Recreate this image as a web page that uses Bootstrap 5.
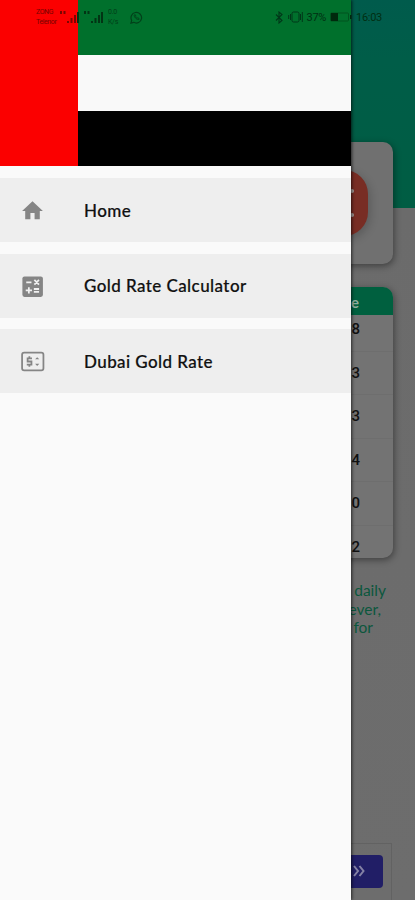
<!DOCTYPE html>
<html lang="en">
<head>
<meta charset="utf-8">
<meta name="viewport" content="width=device-width, initial-scale=1">
<title>Dubai Gold Rate</title>
<link href="https://cdn.jsdelivr.net/npm/bootstrap@5.3.0/dist/css/bootstrap.min.css" rel="stylesheet">
<style>
body{font-family:Lato,"Open Sans",sans-serif;background:#6c6c6c;color:#111;width:415px;height:900px;overflow:hidden}
svg{display:block;flex:none}
.screen{height:900px;overflow:hidden;background:linear-gradient(#005b4c 0,#005d48 60px,#005d43 208px,#6b6b6b 208px,#6d6d6d 100%);padding:142px 22px 0}
.pane{background:#707070;border-radius:10px;box-shadow:1px 2px 7px rgba(0,0,0,.42)}
.promo{height:122px;padding-right:25px}
.pill{width:64px;height:66px;border-radius:24px;background:#782d24;box-shadow:2px 3px 10px rgba(0,0,0,.2);padding-left:46px;gap:20px}
.pill i{width:4px;height:4px;border-radius:50%;background:#a59a98}
.rates{margin-top:23px;height:271px;background:#737373;overflow:hidden}
.rates-head{height:28px;background:#00603f;color:#8fae9f;font-size:15px;font-weight:700;padding-right:34px;line-height:30px}
.rate{height:43.6px;font:500 15px/43.6px Roboto,sans-serif;padding-right:33px;border-bottom:1px solid #6e6e6e}
.rate:nth-child(2){margin-top:-7px}
.note{margin-top:23px;color:#0b573d;font-size:15.5px;line-height:18.5px}
.note div:nth-child(1){padding-right:7px}
.note div:nth-child(2){padding-right:12px}
.note div:nth-child(3){padding-right:20px}
.pager{margin-top:206px;margin-right:1px;height:70px;border:1px solid #626262;padding:11px 8px}
.pager-next{width:62px;height:33px;border-radius:4px;background:#211e66;padding-right:17px}
.drawer{left:0;top:0;width:351px;height:900px;background:#fafafa;box-shadow:1px 0 3px rgba(0,0,0,.65)}
.flag{height:166px}
.flag-red{width:78px;background:#fb0000}
.flag-green{height:55px;background:#00702c}
.flag-white{height:56px;background:#f9f9f9}
.flag-black{height:55px;background:#000}
.menu{padding-top:12px;gap:11.5px}
.entry{height:64px;background:#eee;padding:1px 0 0 20px;gap:39px;font-size:17px;font-weight:500;color:#111;-webkit-text-stroke:.2px #111;letter-spacing:.42px}
.status{left:0;top:0;width:415px;height:34px;padding:0 33px 0 36px;color:#002f12;font:11px/1 Roboto,sans-serif;letter-spacing:-.3px}
.carrier{font-size:7px;line-height:10px;width:20px;color:#032d12;white-space:nowrap}
.carrier-speed{width:14px}
.status .carrier-red{color:#750400;letter-spacing:-.4px}
</style>
<script src="https://cdn.jsdelivr.net/npm/bootstrap@5.3.0/dist/js/bootstrap.bundle.min.js"></script>
</head>
<body>
<main class="screen">
  <section class="pane promo d-flex align-items-center justify-content-end">
    <div class="pill d-flex flex-column justify-content-center"><i></i><i></i></div>
  </section>
  <section class="pane rates text-end">
    <div class="rates-head position-relative z-1">e</div>
    <div class="rate">8</div>
    <div class="rate">3</div>
    <div class="rate">3</div>
    <div class="rate">4</div>
    <div class="rate">0</div>
    <div class="rate">2</div>
  </section>
  <section class="note text-end"><div>daily</div><div>ever,</div><div>for</div></section>
  <section class="pager d-flex justify-content-end">
    <div class="pager-next d-flex align-items-center justify-content-end">
      <svg width="14" height="14" viewBox="0 0 14 14" fill="none" stroke="#8582a5" stroke-width="2"><path d="M2 2l4 5-4 5M7.500 2l4 5-4 5"/></svg>
    </div>
  </section>
</main>

<aside class="drawer position-absolute z-2">
  <div class="flag d-flex">
    <div class="flag-red"></div>
    <div class="flex-grow-1"><div class="flag-green"></div><div class="flag-white"></div><div class="flag-black"></div></div>
  </div>
  <nav class="menu d-flex flex-column">
    <div class="entry d-flex align-items-center">
      <svg width="25" height="25" viewBox="0 0 24 24" fill="#858585"><path d="M10 20.500v-6h4v6h5v-8h3L12 3 2 12.500h3v8z"/></svg>
      <span>Home</span>
    </div>
    <div class="entry d-flex align-items-center">
      <svg width="25" height="25" viewBox="0 0 24 24"><rect x="2.300" y="2.300" width="19.700" height="19.700" rx="2" fill="#858585"/><path d="M6 8h5M13.800 5.700l4.400 4.400m0-4.400l-4.400 4.400M5.500 15.800h6M8.500 12.800v6M13.300 14.400h5M13.300 17.200h5" stroke="#f1f1f1" stroke-width="1.700"/></svg>
      <span>Gold Rate Calculator</span>
    </div>
    <div class="entry d-flex align-items-center">
      <svg width="25" height="25" viewBox="0 0 24 24" fill="none" stroke="#858585"><rect x="2" y="3.500" width="20.500" height="17" rx="2" stroke-width="1.700"/><path d="M11.500 9H7.300v3h3.700v3H6.500M9 7v2M9 15v2" stroke-width="1.700"/><path d="M14.500 9.800l2-2 2 2zM14.500 14.200l2 2 2-2z" fill="#858585" stroke="none"/></svg>
      <span>Dubai Gold Rate</span>
    </div>
  </nav>
</aside>

<header class="status position-absolute z-3 d-flex align-items-center justify-content-between">
  <div class="d-flex align-items-center">
    <div class="carrier carrier-red"><div>ZONG</div><div>Telenor</div></div>
    <svg class="ms-1" width="20" height="14" viewBox="0 0 20 14"><path d="M0 1h2v3H0zM3.500 1h2v3h-2zM7 11h2v2H7zM10.500 8h2v5h-2zM14 5h2v8h-2z" fill="#7b0500"/><path d="M17 2h2v11h-2z" fill="#023414"/></svg>
    <svg class="ms-1" width="20" height="14" viewBox="0 0 20 14" fill="#023414"><path d="M0 1h2v3H0zM3.500 1h2v3h-2zM7 11h2v2H7zM10.500 8h2v5h-2zM14 5h2v8h-2zM17 2h2v11h-2z"/></svg>
    <div class="carrier carrier-speed ms-1 opacity-75"><div>0.0</div><div>K/s</div></div>
    <svg class="ms-2" width="13" height="13" viewBox="0 0 14 14" fill="none" stroke="#02401a" stroke-width="1.300"><path d="M1 13l.8-3A5.700 5.700 0 1 1 4 12.200z"/><path d="M4.600 4.200c-.7 2 2.800 5.800 5.200 4.800l-.3-1.200-1.500-.5-.6.600-1.500-1.600.5-.7-.6-1.500z" stroke-width="1"/></svg>
  </div>
  <div class="d-flex align-items-center">
    <svg width="9" height="13" viewBox="0 0 9 13" fill="none" stroke="#003719" stroke-width="1.100"><path d="M1 3.500l6 6-3 2.500V1l3 2.500-6 6"/></svg>
    <svg class="ms-1 me-1" width="15" height="12" viewBox="0 0 15 12" fill="none" stroke="#003719"><rect x="4" y="1" width="7" height="10" rx="1.500"/><path d="M2.500 3v6M.7 4v4M12.500 3v6M14.300 1v10"/></svg>
    <span>37%</span>
    <svg class="ms-1" width="22" height="10" viewBox="0 0 22 10"><rect x=".5" y="1" width="18" height="8" rx="1" fill="none" stroke="#00521f"/><path d="M1 1h7v8H1zM20 3h1.500v4H20z" fill="#00290d"/></svg>
    <span class="ms-1">16:03</span>
  </div>
</header>
</body>
</html>
